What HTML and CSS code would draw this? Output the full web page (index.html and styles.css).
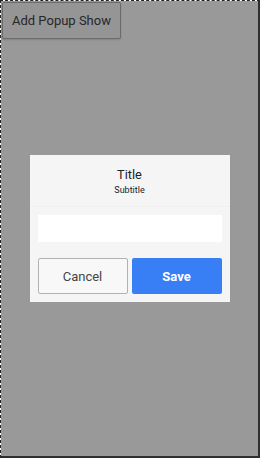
FILE: index.html
```html
<!DOCTYPE html>
<html lang="en">
<head>
    <meta charset="UTF-8">
    <meta name="viewport" content="width=device-width, initial-scale=1.0">
    <title>Popup</title>
    <link rel="stylesheet" href="styles.css">
</head>
<body>
    <div class="frame">
        <div class="page">
            <button class="add-button">Add Popup Show</button>
        </div>

        <div class="backdrop">
            <div class="popup">
                <div class="popup-head">
                    <div class="popup-title">Title</div>
                    <div class="popup-sub-title">Subtitle</div>
                </div>
                <div class="popup-body">
                    <input class="popup-input" type="text">
                </div>
                <div class="popup-buttons">
                    <button class="btn btn-default">Cancel</button>
                    <button class="btn btn-positive">Save</button>
                </div>
            </div>
        </div>
    </div>
</body>
</html>
```

FILE: styles.css
```css
* {
    margin: 0;
    padding: 0;
    box-sizing: border-box;
    font-family: Roboto, 'Noto Sans', 'Liberation Sans', sans-serif;
}

html, body {
    width: 260px;
    height: 458px;
    overflow: hidden;
}

body {
    background-color: #FFFFFF;
    color: #444444;
}

.frame {
    position: relative;
    width: 260px;
    height: 458px;
    border-top: 1px dashed #222222;
    border-left: 1px dashed #222222;
    border-right: 2px solid #2E2E2E;
    border-bottom: 2px solid #2E2E2E;
    background: #FFFFFF;
}

.page {
    padding: 1px;
}

.add-button {
    height: 37px;
    padding: 0 9px;
    background: #F8F8F8;
    border: 1px solid #B2B2B2;
    border-radius: 2px;
    color: #444444;
    font-size: 13px;
    box-shadow: 0 1px 2px rgba(0,0,0,0.15);
}

.backdrop {
    position: absolute;
    top: 0;
    left: 0;
    right: 0;
    bottom: 0;
    background: rgba(0, 0, 0, 0.4);
    display: flex;
    align-items: center;
    justify-content: center;
}

.popup {
    width: 200px;
    background: rgba(255, 255, 255, 0.9);
    display: flex;
    flex-direction: column;
}

.popup-head {
    padding: 12px 8px 10px;
    text-align: center;
    border-bottom: 1px solid #F0F0F0;
}

.popup-title {
    font-size: 12.8px;
    line-height: 16px;
    color: #222222;
}

.popup-sub-title {
    font-size: 9px;
    line-height: 12px;
    color: #222222;
    margin-top: 1px;
}

.popup-body {
    padding: 8px;
}

.popup-input {
    display: block;
    width: 100%;
    height: 27px;
    border: none;
    background: #FFFFFF;
    outline: none;
}

.popup-buttons {
    display: flex;
    gap: 4px;
    padding: 8px;
}

.btn {
    flex: 1;
    height: 36px;
    border-radius: 2px;
    font-size: 13px;
    cursor: pointer;
}

.btn-default {
    background: #F8F8F8;
    border: 1px solid #B2B2B2;
    color: #444444;
}

.btn-positive {
    background: #387EF5;
    border: 1px solid transparent;
    color: #FFFFFF;
    font-weight: bold;
}
```
